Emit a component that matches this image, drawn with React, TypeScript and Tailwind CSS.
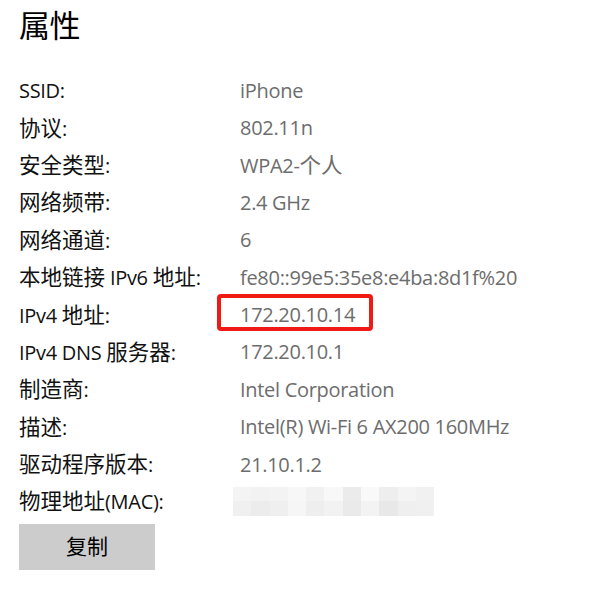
import React from "react";

const rows: [string, string][] = [
  ["SSID:", "iPhone"],
  ["协议:", "802.11n"],
  ["安全类型:", "WPA2-个人"],
  ["网络频带:", "2.4 GHz"],
  ["网络通道:", "6"],
  ["本地链接 IPv6 地址:", "fe80::99e5:35e8:e4ba:8d1f%20"],
  ["IPv4 地址:", "172.20.10.14"],
  ["IPv4 DNS 服务器:", "172.20.10.1"],
  ["制造商:", "Intel Corporation"],
  ["描述:", "Intel(R) Wi-Fi 6 AX200 160MHz"],
  ["驱动程序版本:", "21.10.1.2"],
];

const mosaicTop = ["#f4f4f4", "#f2f2f2", "#f3f3f3", "#f7f7f7", "#f1f1f1", "#f8f8f8", "#ebebeb", "#f9f9f9", "#eeeeee", "#f4f4f4", "#f1f1f1"];
const mosaicBot = ["#f0f0f0", "#ececec", "#efefef", "#f6f6f6", "#eeeeee", "#f2f2f2", "#eaeaea", "#f3f3f3", "#e8e8e8", "#efefef", "#f0f0f0"];

const font = { fontFamily: '"Open Sans", "Noto Sans CJK SC", sans-serif' };

function Mixed({ text }: { text: string }) {
  const parts = text.split(/([\u4e00-\u9fff]+)/).filter((p) => p.length > 0);
  return (
    <>
      {parts.map((p, i) =>
        /[\u4e00-\u9fff]/.test(p) ? (
          <span key={i} className="text-[21.5px] tracking-[0px]">
            {p}
          </span>
        ) : (
          <span key={i}>{p}</span>
        )
      )}
    </>
  );
}

export default function App() {
  return (
    <div className="w-[598px] h-[594px] bg-white text-black" style={font}>
      <div className="pl-[19px] pt-[3px]">
        <h1 className="text-[31px] leading-[44px] font-normal tracking-[-0.5px]">属性</h1>
        <div className="mt-[25px] flex flex-col">
          {rows.map(([k, v], i) => (
            <div key={i} className="flex items-center h-[37.4px] text-[20px] leading-[28px] tracking-[-0.3px]">
              <div className="w-[221px] shrink-0 text-[#111]">
                <Mixed text={k} />
              </div>
              {k === "IPv4 地址:" ? (
                <div className="relative text-[#6d6d6d]">
                  {v}
                  <div className="absolute left-[-23px] top-1/2 mt-[-21px] w-[156px] h-[37px] border-[4px] border-[#f01a14] rounded-[4px]" />
                </div>
              ) : (
                <div className="text-[#6d6d6d]">
                  <Mixed text={v} />
                </div>
              )}
            </div>
          ))}
          <div className="flex items-center h-[37.4px] text-[20px] leading-[28px] tracking-[-0.3px]">
            <div className="w-[214px] shrink-0 text-[#111]">
              <Mixed text="物理地址(MAC):" />
            </div>
            <div className="flex flex-col">
              <div className="flex">
                {mosaicTop.map((c, i) => (
                  <div key={i} className="w-[18.3px] h-[14px]" style={{ backgroundColor: c }} />
                ))}
              </div>
              <div className="flex">
                {mosaicBot.map((c, i) => (
                  <div key={i} className="w-[18.3px] h-[15px]" style={{ backgroundColor: c }} />
                ))}
              </div>
            </div>
          </div>
        </div>
        <button className="mt-[3px] w-[136px] h-[46px] bg-[#cccccc] text-[21px] text-black flex items-center justify-center">
          复制
        </button>
      </div>
    </div>
  );
}
